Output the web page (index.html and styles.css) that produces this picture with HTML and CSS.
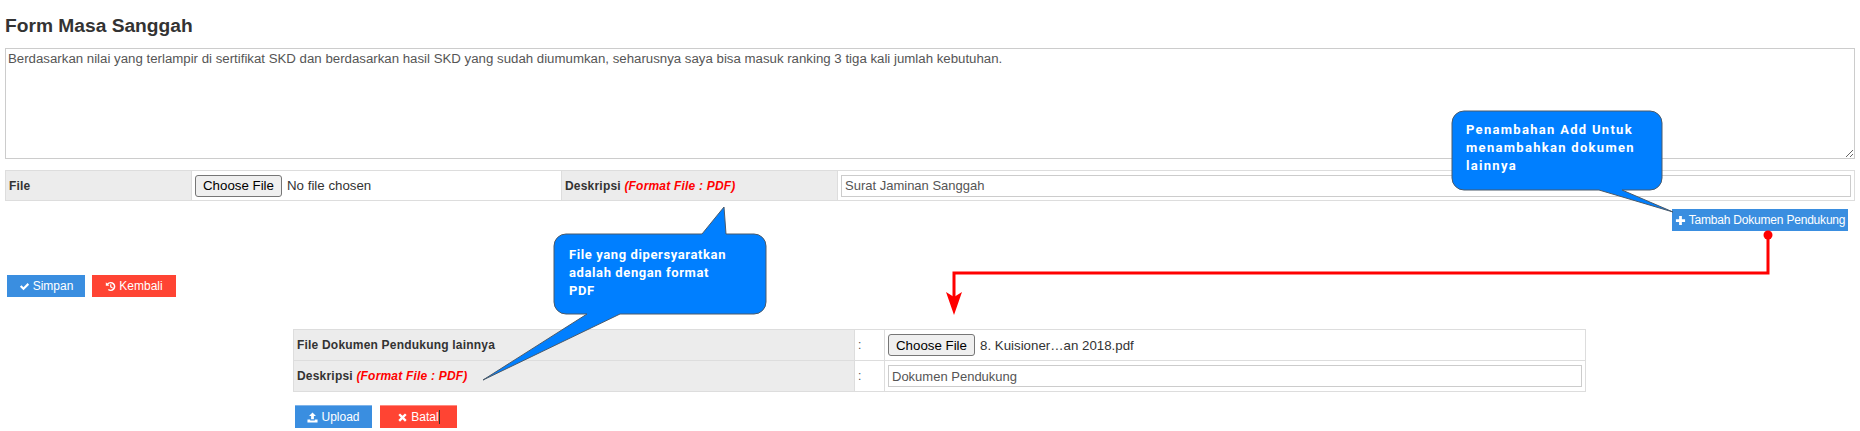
FILE: index.html
```html
<!DOCTYPE html>
<html lang="en">
<head>
  <meta charset="UTF-8" />
  <title>Form Masa Sanggah</title>
  <link rel="stylesheet" href="styles.css">
</head>
<body>

  <h1>Form Masa Sanggah</h1>

  <textarea class="alasan">Berdasarkan nilai yang terlampir di sertifikat SKD dan berdasarkan hasil SKD yang sudah diumumkan, seharusnya saya bisa masuk ranking 3 tiga kali jumlah kebutuhan.</textarea>

  <table class="form-table file-table">
    <tr>
      <th class="col-file">File</th>
      <td class="col-choose">
        <button class="choose">Choose File</button><span class="file-name">No file chosen</span>
      </td>
      <th class="col-desc">Deskripsi <em>(Format File : PDF)</em></th>
      <td><input type="text" value="Surat Jaminan Sanggah"></td>
    </tr>
  </table>

  <div class="tambah-row">
    <button class="btn btn-blue btn-tambah">
      <svg class="icon" viewBox="0 0 12 12"><path d="M4.500 1h3v3.500H11v3H7.500V11h-3V7.500H1v-3h3.500z"/></svg>
      Tambah Dokumen Pendukung
    </button>
  </div>

  <div class="actions">
    <button class="btn btn-blue btn-simpan">
      <svg class="icon" viewBox="0 0 12 12"><path d="M1 6.300l1.700-1.700 2.200 2.200L9.400 2.300 11 4 4.900 10.100z"/></svg>
      Simpan
    </button>
    <button class="btn btn-red btn-kembali">
      <svg class="icon" viewBox="0 0 12 12"><path d="M6.300 1A5 5 0 0 1 6.300 11a5 5 0 0 1-3.200-1.200l1.100-1.200A3.300 3.300 0 1 0 3.500 4l1.300 1.300H.9V1.400l1.400 1.400A5 5 0 0 1 6.300 1zM5.600 3.500h1.300v2.600l1.700 1-.6 1.100-2.400-1.400z"/></svg>
      Kembali
    </button>
  </div>

  <div class="upload-panel">
    <table class="form-table">
      <tr>
        <th class="col-label">File Dokumen Pendukung lainnya</th>
        <td class="col-colon">:</td>
        <td>
          <button class="choose">Choose File</button><span class="file-name">8. Kuisioner…an 2018.pdf</span>
        </td>
      </tr>
      <tr>
        <th class="col-label">Deskripsi <em>(Format File : PDF)</em></th>
        <td class="col-colon">:</td>
        <td><input type="text" value="Dokumen Pendukung"></td>
      </tr>
    </table>
    <div class="upload-actions">
      <button class="btn btn-blue btn-upload">
        <svg class="icon" viewBox="0 0 12 12"><path d="M6 .5L9.800 4.300H7.500v3.600h-3V4.300H2.200zM.5 8.300h3v1h5v-1h3v3.200H.5z"/></svg>
        Upload
      </button>
      <button class="btn btn-red btn-upload">
        <svg class="icon" viewBox="0 0 12 12"><path d="M3.300 1.500L6 4.200l2.700-2.700 1.800 1.800L7.800 6l2.700 2.700-1.800 1.800L6 7.800l-2.700 2.700-1.800-1.800L4.200 6 1.500 3.300z"/></svg>
        <span>Batal<span class="caret"></span></span>
      </button>
    </div>
  </div>

  <!-- annotations drawn over the screenshot -->
  <svg class="notes" viewBox="0 0 1860 431">
    <path class="bubble" d="M1464 111H1650a12 12 0 0 1 12 12V178a12 12 0 0 1-12 12H1622L1673 212L1599 190H1464a12 12 0 0 1-12-12V123a12 12 0 0 1 12-12z"/>
    <path class="bubble" d="M566 234H702L724 207L726 234H754a12 12 0 0 1 12 12V302a12 12 0 0 1-12 12H620L483 380L587 314H566a12 12 0 0 1-12-12V246a12 12 0 0 1 12-12z"/>
    <circle class="red-dot" cx="1768" cy="235" r="4.500"/>
    <path class="red-line" d="M1768 236V273H954V298"/>
    <path class="red-head" d="M954 315L946 292L954 297L962 292z"/>
  </svg>

  <div class="note note-add">Penambahan Add Untuk<br>menambahkan dokumen<br>lainnya</div>
  <div class="note note-pdf">File yang dipersyaratkan<br>adalah dengan format<br>PDF</div>

</body>
</html>
```

FILE: styles.css
```css
body {
  margin: 0;
  padding: 0 5px;
  height: 431px;
  overflow: hidden;
  position: relative;
  background: #fff;
  color: #333;
  font-family: "Liberation Sans", Arial, sans-serif;
  font-size: 12px;
}
h1 {
  margin: 0;
  padding-top: 15px;
  height: 48px;
  box-sizing: border-box;
  font-size: 19.200px;
  line-height: 22px;
  color: #333;
}
.alasan {
  display: block;
  box-sizing: border-box;
  width: 1850px;
  height: 111px;
  padding: 2px;
  border: 1px solid #ccc;
  font-family: inherit;
  font-size: 13.250px;
  line-height: 16px;
  color: #555;
}
.form-table {
  width: 100%;
  border-collapse: collapse;
  table-layout: fixed;
}
.form-table th,
.form-table td {
  border: 1px solid #ddd;
  padding: 0 3px;
  height: 29px;
  text-align: left;
  font-size: 12px;
}
.form-table th {
  background: #ececec;
  font-weight: bold;
  color: #333;
  letter-spacing: 0.2px;
}
.form-table em {
  color: #f00;
  font-style: italic;
}
.file-table {
  margin-top: 11px;
}
.col-file { width: 179px; }
.col-choose { width: 363px; }
.col-desc { width: 269px; }
.col-label { width: 554px; }
.col-colon { width: 23px; color: #555; }
input {
  display: block;
  box-sizing: border-box;
  width: 100%;
  height: 22px;
  padding: 0 3px;
  border: 1px solid #ccc;
  font-family: inherit;
  font-size: 13px;
  color: #555;
}
.choose {
  box-sizing: border-box;
  width: 87px;
  height: 22px;
  padding: 0;
  background: #efefef;
  border: 1px solid #767676;
  border-radius: 3px;
  font-family: inherit;
  font-size: 13.300px;
  color: #000;
}
.file-name {
  margin-left: 5px;
  font-size: 13.300px;
  color: #333;
}
.tambah-row {
  display: flex;
  justify-content: flex-end;
  margin-top: 8px;
  padding-right: 7px;
}
.btn {
  display: inline-flex;
  align-items: center;
  justify-content: center;
  gap: 3px;
  box-sizing: border-box;
  height: 22px;
  padding: 0;
  border: 0;
  color: #fff;
  font-family: inherit;
  font-size: 12px;
}
.btn-blue { background: #3a8ee0; }
.btn-red { background: #ff4433; }
.btn-tambah { width: 176px; letter-spacing: -0.2px; }
.btn-simpan { width: 78px; }
.btn-kembali { width: 84px; }
.icon {
  width: 11px;
  height: 11px;
  fill: #fff;
}
.actions {
  display: flex;
  gap: 7px;
  margin-top: 44px;
  padding-left: 2px;
}
.upload-panel {
  width: 1293px;
  margin-top: 32px;
  margin-left: 288px;
}
.upload-panel .form-table th,
.upload-panel .form-table td {
  height: 30px;
}
.upload-actions {
  display: flex;
  gap: 8px;
  margin-top: 13px;
  padding-left: 2px;
}
.btn-upload {
  width: 77px;
  height: 23px;
  border-top: 1px solid #7fb4ea;
}
.btn-red.btn-upload {
  border-top-color: #ff8a80;
}
.caret {
  display: inline-block;
  height: 14px;
  border-left: 1px solid #333;
  vertical-align: -3px;
}
.notes {
  position: absolute;
  top: 0;
  left: 0;
  width: 1860px;
  height: 431px;
  pointer-events: none;
}
.bubble {
  fill: #007fff;
  stroke: #4a5a6a;
  stroke-width: 1;
}
.red-dot,
.red-head {
  fill: #f00;
}
.red-line {
  fill: none;
  stroke: #f00;
  stroke-width: 3;
}
.note {
  position: absolute;
  color: #fff;
  font-family: Roboto, sans-serif;
  font-weight: bold;
  font-size: 13px;
  line-height: 18px;
  letter-spacing: 0.6px;
}
.note-add {
  left: 1466px;
  top: 121px;
  letter-spacing: 1.300px;
}
.note-pdf {
  left: 569px;
  top: 246px;
}
```
